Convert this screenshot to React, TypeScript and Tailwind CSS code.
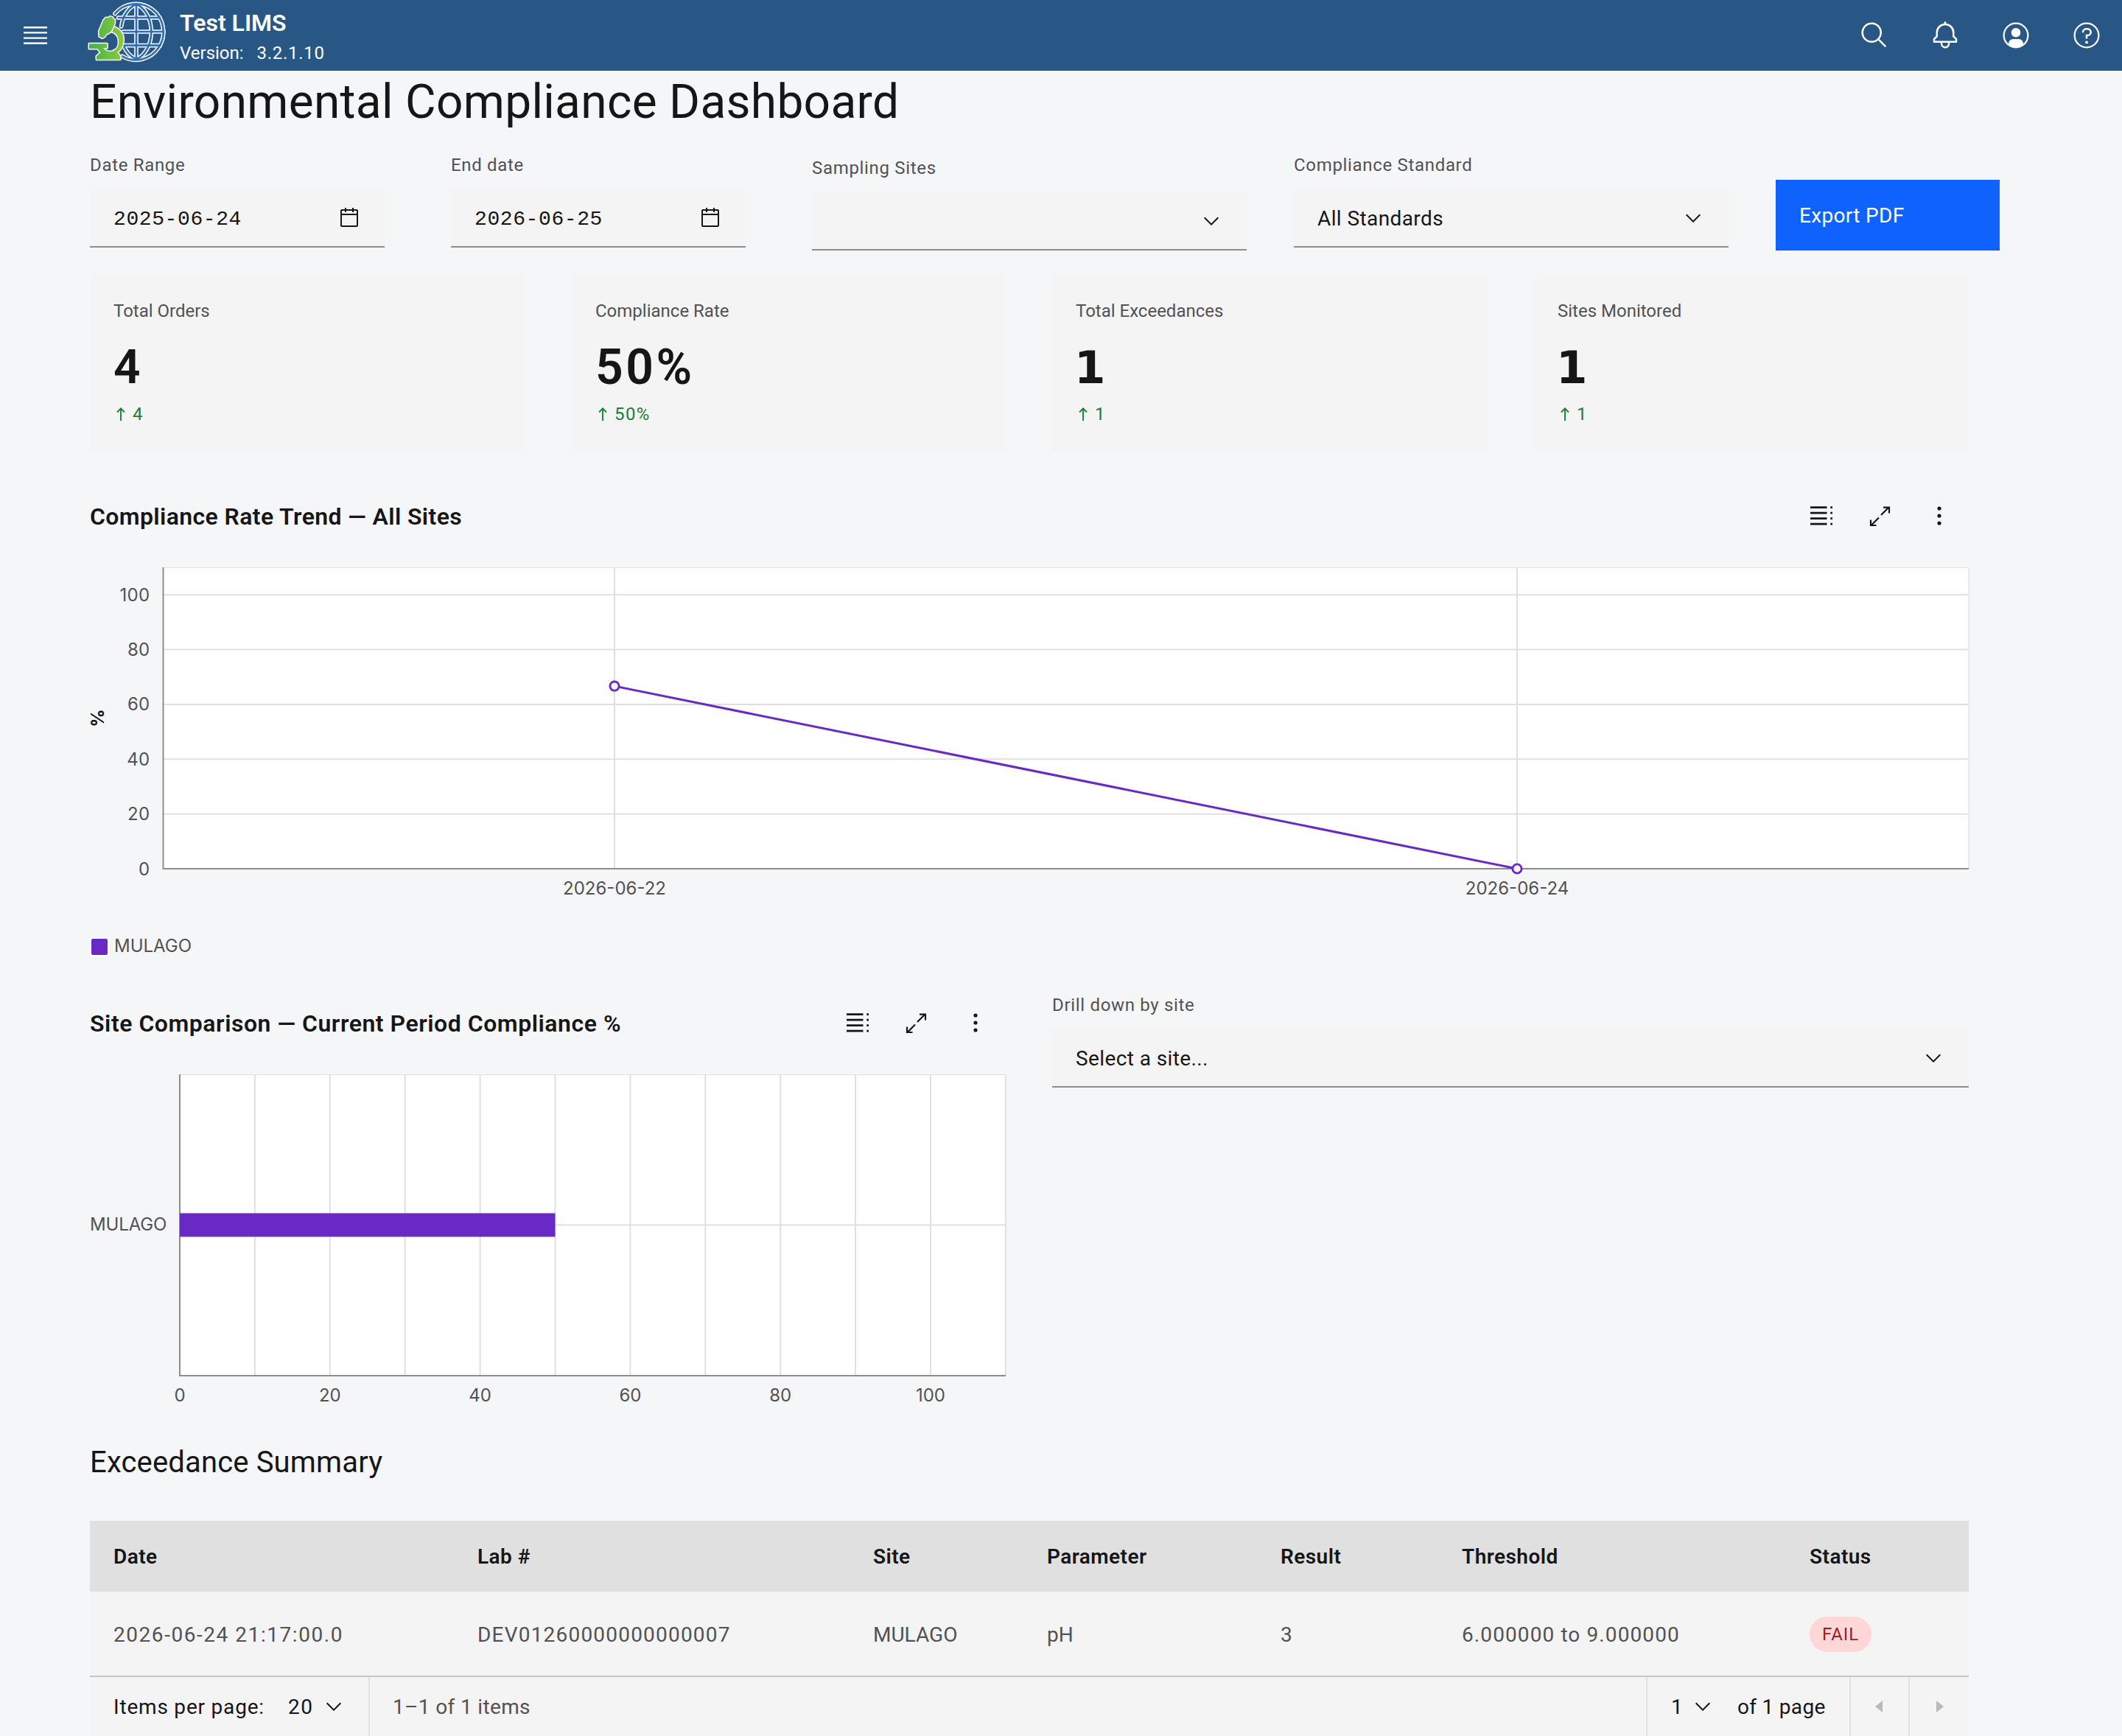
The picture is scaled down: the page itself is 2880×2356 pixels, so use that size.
import React from "react";

const INK = "#161616";
const GRID = "#e0e0e0";
const AXIS = "#8d8d8d";
const PURPLE = "#6929c4";

function Logo() {
  const globe = (
    <>
      <path d="M138 56 A112 114 0 1 1 168 229" />
      <path d="M225 17V241" />
      <path d="M225 17C262 32 286 78 286 129S262 226 225 241" />
      <path d="M225 17C194 30 170 62 164 108" />
      <path d="M172 184C184 212 202 232 225 241" />
      <path d="M152 72H320" />
      <path d="M172 129H336" />
      <path d="M174 185H322" />
    </>
  );
  return (
    <svg viewBox="0 0 390 288" className="h-24 w-[130px]" fill="none">
      <defs>
        <linearGradient id="scope" x1="30" x2="175" y1="0" y2="0" gradientUnits="userSpaceOnUse">
          <stop offset="0" stopColor="#3ab54a" />
          <stop offset="1" stopColor="#93c83e" />
        </linearGradient>
      </defs>
      <g stroke="#fff" strokeWidth="17" strokeLinecap="round">{globe}</g>
      <g stroke="#2f6db5" strokeWidth="8" strokeLinecap="round">{globe}</g>
      <g fill="url(#scope)" stroke="#fff" strokeWidth="9" strokeLinejoin="round" paintOrder="stroke">
        <path d="M128 108C156 114 174 136 173 164C172 186 164 202 148 213L160 229V242H63V229L80 213L66 198H33V178H106V196H90C98 208 112 212 126 209C146 204 156 186 153 163C151 144 140 131 120 128Z" />
        <path d="M112 73L118 67L128 70L130 76L138 80L137 96L124 126L112 136L104 138L96 150L86 155L74 148L73 127L92 82L101 72Z" />
      </g>
    </svg>
  );
}

function Chevron({ className = "" }: { className?: string }) {
  return (
    <svg viewBox="0 0 16 16" className={`size-8 shrink-0 ${className}`} fill={INK}>
      <path d="M8 11 3 6 3.7 5.3 8 9.6 12.3 5.3 13 6z" />
    </svg>
  );
}

function CalendarIcon() {
  return (
    <svg viewBox="0 0 32 32" className="size-8" fill={INK}>
      <path d="M26,4h-4V2h-2v2h-8V2h-2v2H6C4.9,4,4,4.9,4,6v20c0,1.1,0.9,2,2,2h20c1.1,0,2-0.9,2-2V6C28,4.9,27.1,4,26,4z M26,26H6V12h20V26z M26,10H6V6h4v2h2V6h8v2h2V6h4V10z" />
    </svg>
  );
}

function TopBar() {
  return (
    <header className="flex h-24 items-center bg-[#295785] text-white">
      <svg viewBox="0 0 20 20" className="ml-7 size-10" fill="currentColor">
        <path d="M2 14.8h16V16H2zM2 11.2h16v1.2H2zM2 7.6h16v1.2H2zM2 4h16v1.2H2z" />
      </svg>
      <div className="ml-[42px]">
        <Logo />
      </div>
      <div className="ml-1 flex h-24 flex-col pt-[11px]">
        <div className="h-10 text-[32px]/[40px] font-semibold">Test LIMS</div>
        <div className="flex gap-[18px] text-[24px]/[42px]">
          <span>Version:</span>
          <span className="tracking-[0.7px]">3.2.1.10</span>
        </div>
      </div>
      <div className="ml-auto mr-7 flex items-center gap-14">
        <svg viewBox="0 0 32 32" className="size-10" fill="currentColor">
          <path d="M29 27.5859l-7.5521-7.5521a11.0177 11.0177 0 1 0-1.4141 1.4141L27.5859 29zM4 13a9 9 0 1 1 9 9A9.01 9.01 0 0 1 4 13z" />
        </svg>
        <svg viewBox="0 0 32 32" className="size-10" fill="currentColor">
          <path d="M28.7071,19.293,26,16.5859V13a10.0136,10.0136,0,0,0-9-9.9492V1H15V3.0508A10.0136,10.0136,0,0,0,6,13v3.5859L3.2929,19.293A1,1,0,0,0,3,20v3a1,1,0,0,0,1,1h7v.7768a5.152,5.152,0,0,0,4.5,5.1987A5.0057,5.0057,0,0,0,21,25V24h7a1,1,0,0,0,1-1V20A1,1,0,0,0,28.7071,19.293ZM19,25a3,3,0,0,1-6,0V24h6Zm8-3H5V20.4141L7.707,17.707A1,1,0,0,0,8,17V13a8,8,0,0,1,16,0v4a1,1,0,0,0,.293.707L27,20.4141Z" />
        </svg>
        <svg viewBox="0 0 32 32" className="size-10" fill="currentColor">
          <circle cx="16" cy="16" r="13.1" fill="none" stroke="currentColor" strokeWidth="1.8" />
          <circle cx="16" cy="13" r="5" />
          <path d="M8 26V24.9A4.996 4.996 0 0 1 13 20h6a4.996 4.996 0 0 1 5 4.9V26A13 13 0 0 1 8 26z" />
        </svg>
        <svg viewBox="0 0 32 32" className="size-10" fill="currentColor">
          <circle cx="16" cy="16" r="13.1" fill="none" stroke="currentColor" strokeWidth="1.8" />
          <circle cx="16" cy="23.5" r="1.5" />
          <path d="M17 8h-1.5A4.49 4.49 0 0 0 11 12.5V13h2v-.5A2.5 2.5 0 0 1 15.5 10H17a2.5 2.5 0 0 1 0 5h-2v4.5h2V17a4.5 4.5 0 0 0 0-9z" />
        </svg>
      </div>
    </header>
  );
}

function Label({ children }: { children: React.ReactNode }) {
  return <div className="mb-4 whitespace-nowrap text-[24px]/[32px] tracking-[0.68px] text-[#525252]">{children}</div>;
}

function DateField({ label, value }: { label: string; value: string }) {
  return (
    <div className="w-[400px]">
      <Label>{label}</Label>
      <div className="flex h-20 items-center justify-between border-b-2 border-[#8d8d8d] bg-[#f4f4f4] px-8 pt-0.5">
        <span className="pt-[3px] font-['Liberation_Mono',monospace] text-[28px] tracking-[0.6px]">{value}</span>
        <CalendarIcon />
      </div>
    </div>
  );
}

function SelectField({ label, value, className = "" }: { label: string; value?: string; className?: string }) {
  return (
    <div className={className}>
      <Label>{label}</Label>
      <div className="flex h-20 items-center justify-between border-b-2 border-[#8d8d8d] bg-[#f4f4f4] px-8 pt-0.5">
        <span className="pt-0.5 text-[28px] tracking-[0.4px]">{value}</span>
        <Chevron />
      </div>
    </div>
  );
}

const tiles = [
  { label: "Total Orders", value: "4", delta: "4", big: "" },
  { label: "Compliance Rate", value: "50%", delta: "50%", big: "text-[66px] tracking-[3.6px]" },
  { label: "Total Exceedances", value: "1", delta: "1", big: "-ml-0.5 font-['DejaVu_Sans',sans-serif] text-[61px]" },
  { label: "Sites Monitored", value: "1", delta: "1", big: "-ml-0.5 font-['DejaVu_Sans',sans-serif] text-[61px]" },
];

function Tile({ label, value, delta, big }: (typeof tiles)[number]) {
  return (
    <div className="h-60 bg-[#f4f4f4] px-8 pt-8">
      <div className="h-9 text-[24px]/[36px] text-[#525252]">{label}</div>
      <div className="mt-[23px] h-[72px] text-[64px]/[72px] font-semibold">
        <div className={`leading-[72px] ${big}`}>{value}</div>
      </div>
      <div className="mt-[11px] flex items-center gap-2.5 pl-1 text-[24px]/[32px] tracking-[1.4px] text-[#198038]">
        <svg viewBox="0 0 12 18" className="h-[18px] w-3" fill="none" stroke="#198038" strokeWidth="1.9">
          <path d="M6 18V1.5M1 6.5 6 1.3 11 6.5" />
        </svg>
        <span>{delta}</span>
      </div>
    </div>
  );
}

function ChartHeader({ title, tracking }: { title: string; tracking: string }) {
  return (
    <div className="flex h-12 items-center justify-between">
      <h3 className={`whitespace-nowrap pt-0.5 text-[32px]/[40px] font-semibold ${tracking}`}>{title}</h3>
      <svg viewBox="0 0 180 48" className="mr-9 h-12 w-[180px]" fill={INK}>
        <path d="M1 11.3h22.5V14H1zM1 18.8h22.5v2.7H1zM1 26.3h22.5V29H1zM1 33.8h22.5v2.7H1z" />
        <path d="M28.3 11.3H31V14h-2.7zM28.3 18.8H31v2.7h-2.7zM28.3 26.3H31V29h-2.7zM28.3 33.8H31v2.7h-2.7z" />
        <g fill="none" stroke={INK} strokeWidth="2.2">
          <path d="M97 23 107.500 12.500M100 12.700H108V20.500" />
          <path d="M94 26.500 83.500 37M83 29.500V37H90.500" />
        </g>
        <circle cx="176" cy="14" r="2.6" />
        <circle cx="176" cy="24" r="2.6" />
        <circle cx="176" cy="34" r="2.6" />
      </svg>
    </div>
  );
}

function TrendChart() {
  const y = (v: number) => 409 - v * 3.718;
  const x1 = 712;
  const x2 = 1937;
  return (
    <svg
      viewBox="0 0 2560 460"
      className="block h-[460px] w-[2560px] overflow-visible font-['Inter',sans-serif] text-[24px]"
    >
      <rect x="100" y="0" width="2450" height="409" fill="#fff" />
      <g stroke={GRID} strokeWidth="2">
        <path d="M100 0.5H2550" strokeWidth="1" />
        {[20, 40, 60, 80, 100].map((v) => (
          <path key={v} d={`M100 ${y(v)}H2550`} />
        ))}
        <path d={`M${x1} 0V409M${x2} 0V409`} />
        <path d="M2550 0V409" stroke="#ebebeb" />
      </g>
      <path d="M99.5 0V409H2550" fill="none" stroke={AXIS} strokeWidth="2" />
      <g fill="#525252" textAnchor="end">
        {[0, 20, 40, 60, 80, 100].map((v) => (
          <text key={v} x="81.5" y={y(v) + 8.5} letterSpacing="0.3">
            {v}
          </text>
        ))}
      </g>
      <g fill="#525252" textAnchor="middle">
        <text x={x1} y="444">
          2026-06-22
        </text>
        <text x={x2} y="444">
          2026-06-24
        </text>
      </g>
      <text transform="translate(18.5 204.5) rotate(-90)" textAnchor="middle" fontWeight="700" fontSize="24" fill={INK}>
        %
      </text>
      <path d={`M${x1} ${y(66.67)}L${x2} 409`} stroke={PURPLE} strokeWidth="3" />
      <g fill="#f4f4f4" stroke={PURPLE} strokeWidth="2.8">
        <circle cx={x1} cy={y(66.67)} r="6.1" />
        <circle cx={x2} cy="409" r="6.1" />
      </g>
    </svg>
  );
}

function ComparisonChart() {
  const x = (v: number) => 122 + v * 10.19;
  return (
    <svg viewBox="0 0 1250 460" className="block h-[460px] w-[1250px] font-['Inter',sans-serif] text-[24px]">
      <rect x="122" y="0" width="1120" height="409" fill="#fff" />
      <g stroke={GRID} strokeWidth="2">
        <path d="M122 0.5H1243" strokeWidth="1" />
        {[10, 20, 30, 40, 50, 60, 70, 80, 90, 100, 110].map((v) => (
          <path key={v} d={`M${x(v)} 0V409`} />
        ))}
        <path d="M122 204.5H1243" />
      </g>
      <path d="M122 0V409H1243" fill="none" stroke={AXIS} strokeWidth="2" />
      <rect x="122" y="188.5" width="509.5" height="32" fill={PURPLE} />
      <text x="0" y="212" fill="#525252" letterSpacing="-0.15">
        MULAGO
      </text>
      <g fill="#525252" textAnchor="middle">
        {[0, 20, 40, 60, 80, 100].map((v) => (
          <text key={v} x={x(v)} y="444">
            {v}
          </text>
        ))}
      </g>
    </svg>
  );
}

function ExceedanceTable() {
  const cols = "grid grid-cols-[494px_537px_236px_317px_246px_472px_184px] items-center pl-8 w-[2550px]";
  return (
    <section className="w-[2550px]">
      <div className={`${cols} h-24 bg-[#e0e0e0] pt-px text-[28px] font-semibold tracking-[0.45px]`}>
        <span>Date</span>
        <span>Lab #</span>
        <span>Site</span>
        <span>Parameter</span>
        <span>Result</span>
        <span>Threshold</span>
        <span>Status</span>
      </div>
      <div className={`${cols} h-[116px] border-b-2 border-[#c6c6c6] bg-[#f4f4f4] pt-0.5 text-[28px] text-[#525252]`}>
        <span className="pt-0.5 tracking-[1.55px]">2026-06-24 21:17:00.0</span>
        <span className="pt-0.5 tracking-[1.2px]">DEV01260000000000007</span>
        <span className="pt-0.5">MULAGO</span>
        <span className="pt-0.5">pH</span>
        <span className="pt-0.5">3</span>
        <span className="pt-0.5 tracking-[1.1px]">6.000000 to 9.000000</span>
        <span className="flex h-12 w-[84px] items-center justify-center rounded-full bg-[#ffd7d9] text-[24px] tracking-[0.9px] text-[#a2191f]">
          FAIL
        </span>
      </div>
      <div className="flex h-20 items-stretch bg-[#f4f4f4] text-[28px]">
        <div className="flex w-[380px] items-center border-r-2 border-[#e0e0e0] pl-8">
          <span className="w-[237px] pt-0.5 tracking-[0.8px]">Items per page:</span>
          <span className="w-[46px] pt-0.5 tracking-[1.5px]">20</span>
          <Chevron />
        </div>
        <div className="flex items-center pl-[31px] pt-0.5 tracking-[0.35px] text-[#525252]">1–1 of 1 items</div>
        <div className="ml-auto flex w-[276px] items-center border-l-2 border-[#e0e0e0] pl-8">
          <span className="w-[27px] pt-0.5">1</span>
          <Chevron />
          <span className="ml-[31px] whitespace-nowrap pt-0.5 tracking-[0.3px]">of 1 page</span>
        </div>
        <div className="flex w-20 items-center justify-center border-l-2 border-[#e0e0e0]">
          <svg viewBox="0 0 32 32" className="size-8" fill="#bababa">
            <path d="M20 24 10 16 20 8z" />
          </svg>
        </div>
        <div className="flex w-[82px] items-center justify-center border-l-2 border-[#e0e0e0]">
          <svg viewBox="0 0 32 32" className="size-8" fill="#bababa">
            <path d="M12 8 22 16 12 24z" />
          </svg>
        </div>
      </div>
    </section>
  );
}

export default function App() {
  return (
    <div className="h-[2356px] w-[2880px] overflow-hidden bg-[#f5f6f8] font-['Roboto',sans-serif] text-[#161616]">
      <TopBar />
      <main className="pl-[122px]">
        <h1 className="pt-[3px] text-[64px]/[80px] tracking-[0.3px]">Environmental Compliance Dashboard</h1>

        <div className="mt-[29px] flex h-[132px] items-start">
          <DateField label="Date Range" value="2025-06-24" />
          <div className="ml-[90px]">
            <DateField label="End date" value="2026-06-25" />
          </div>
          <SelectField className="ml-[90px] mt-1 w-[590px]" label="Sampling Sites" />
          <SelectField className="ml-16 w-[590px]" label="Compliance Standard" value="All Standards" />
          <button className="ml-16 mt-9 h-24 w-[304px] bg-[#0f62fe] pl-8 pt-px text-left text-[28px] tracking-[0.32px] text-white">
            Export PDF
          </button>
        </div>

        <div className="mt-8 grid w-[2550px] grid-cols-[590px_588px_590px_590px] gap-x-16">
          {tiles.map((t) => (
            <Tile key={t.label} {...t} />
          ))}
        </div>

        <section className="mt-16 w-[2550px]">
          <ChartHeader title="Compliance Rate Trend — All Sites" tracking="tracking-[0.38px]" />
          <div className="mt-[46px]">
            <TrendChart />
          </div>
          <div className="mt-[42px] flex h-[26px] items-center">
            <span className="size-[26px] rounded-[4px] border-2 border-white bg-[#6929c4]" />
            <span className="-mt-[3px] ml-[7px] font-['Inter',sans-serif] text-[24px]/[26px] text-[#525252]">MULAGO</span>
          </div>
        </section>

        <div className="mt-[50px] flex">
          <section className="w-[1242px] pt-4">
            <ChartHeader title="Site Comparison — Current Period Compliance %" tracking="tracking-[0.53px]" />
            <div className="mt-[46px]">
              <ComparisonChart />
            </div>
          </section>
          <SelectField className="ml-16 w-[1244px]" label="Drill down by site" value="Select a site..." />
        </div>

        <h2 className="mb-[51px] mt-[39px] text-[40px]/[56px] tracking-[0.15px]">Exceedance Summary</h2>
        <ExceedanceTable />
      </main>
    </div>
  );
}
